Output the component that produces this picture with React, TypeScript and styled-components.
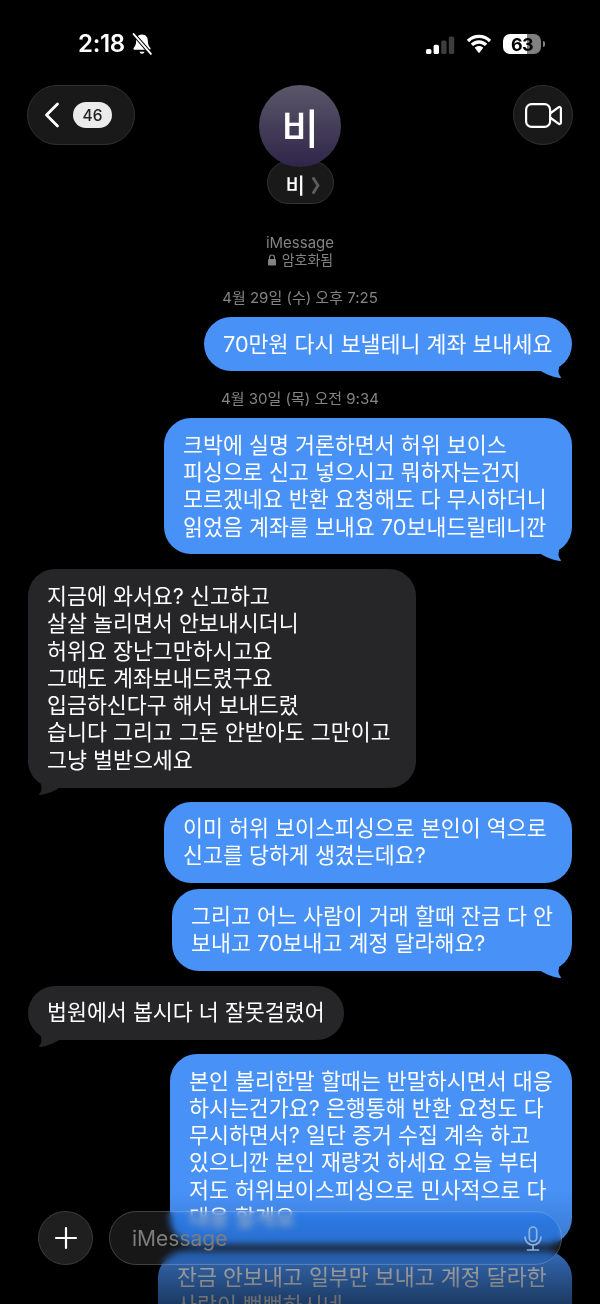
import React from 'react';
import styled, { createGlobalStyle } from 'styled-components';

const FONT = `Inter, "Noto Sans CJK KR", "Noto Sans", sans-serif`;

const GlobalStyle = createGlobalStyle`
  html, body {
    margin: 0;
    padding: 0;
    background: #000;
  }
`;

const Page = styled.div`
  position: relative;
  width: 600px;
  height: 1304px;
  overflow: hidden;
  background: #000;
  color: #fff;
  font-family: ${FONT};
`;

const StatusBar = styled.div`
  display: flex;
  align-items: center;
  justify-content: space-between;
  height: 85px;
  padding: 3px 59px 0 78px;
  box-sizing: border-box;
`;

const StatusGroup = styled.div<{ $gap: number }>`
  display: flex;
  align-items: center;
  gap: ${(p) => p.$gap}px;
`;

const Clock = styled.span`
  font-size: 24px;
  font-weight: 600;
  line-height: 24px;
  letter-spacing: -0.3px;
`;

const Battery = styled.div`
  position: relative;
  display: flex;
  align-items: center;
  justify-content: center;
  width: 38px;
  height: 20px;
  border-radius: 7px;
  background: linear-gradient(90deg, #fff 0 63%, #808080 63% 100%);
  color: #000;
  font-size: 18px;
  font-weight: 700;
  letter-spacing: -0.6px;
  &::after {
    content: '';
    position: absolute;
    right: -4px;
    top: 7px;
    width: 2px;
    height: 6px;
    border-radius: 0 2px 2px 0;
    background: #808080;
  }
`;

const Header = styled.header`
  display: grid;
  grid-template-columns: 1fr auto 1fr;
  align-items: start;
  padding: 0 27px;
`;

const BackPill = styled.div`
  display: flex;
  align-items: center;
  justify-self: start;
  gap: 13px;
  box-sizing: border-box;
  width: 108px;
  height: 60px;
  padding-left: 16px;
  border-radius: 30px;
  background: #191919;
  border: 1px solid #303030;
`;

const CountBadge = styled.span`
  display: flex;
  align-items: center;
  justify-content: center;
  width: 39px;
  height: 26px;
  border-radius: 13px;
  background: #ebebeb;
  color: #222;
  font-size: 15.5px;
  font-weight: 500;
`;

const VideoButton = styled.div`
  display: flex;
  align-items: center;
  justify-content: center;
  justify-self: end;
  box-sizing: border-box;
  width: 60px;
  height: 60px;
  border-radius: 50%;
  background: #191919;
  border: 1px solid #303030;
`;

const Contact = styled.div`
  display: flex;
  flex-direction: column;
  align-items: center;
`;

const Avatar = styled.div`
  position: relative;
  z-index: 1;
  display: flex;
  align-items: center;
  justify-content: center;
  width: 82px;
  height: 82px;
  border-radius: 50%;
  background: linear-gradient(180deg, #5b5769 0%, #2f2549 100%);
  font-size: 41px;
  font-weight: 500;
`;

const NamePill = styled.div`
  display: flex;
  align-items: center;
  gap: 7px;
  box-sizing: border-box;
  width: 67px;
  height: 43px;
  margin-top: -6px;
  padding: 5px 0 0 18px;
  border-radius: 22px;
  background: #191919;
  border: 1px solid #333;
  font-size: 21px;
  font-weight: 500;
  line-height: 1;
`;

const ServiceInfo = styled.div`
  display: flex;
  flex-direction: column;
  align-items: center;
  margin-top: 30px;
  color: #838383;
  font-size: 15px;
  line-height: 17px;
`;

const ServiceRow = styled.div`
  display: flex;
  align-items: center;
  gap: 5px;
  font-size: 14px;
`;

const Thread = styled.main`
  display: flex;
  flex-direction: column;
  padding: 0 28px;
`;

const Timestamp = styled.div<{ $top: number }>`
  margin: ${(p) => p.$top}px 0 9px;
  text-align: center;
  color: #858585;
  font-size: 15px;
  line-height: 20px;
`;

const Bubble = styled.div<{ $sent?: boolean; $width: number; $gap?: number; $indent?: number }>`
  position: relative;
  align-self: ${(p) => (p.$sent ? 'flex-end' : 'flex-start')};
  flex: none;
  box-sizing: border-box;
  width: ${(p) => p.$width}px;
  margin-top: ${(p) => p.$gap ?? 0}px;
  padding: 13.5px 0 13.5px ${(p) => p.$indent ?? 19}px;
  border-radius: 27px;
  background: ${(p) => (p.$sent ? '#4791f7' : '#262628')};
  color: #fff;
  font-size: 21.7px;
  line-height: 27.3px;
`;

const Line = styled.span`
  display: block;
  white-space: nowrap;
`;

const Tail = styled.svg<{ $sent?: boolean }>`
  position: absolute;
  bottom: -8px;
  ${(p) => (p.$sent ? 'right: 9px;' : 'left: 9px; transform: scaleX(-1);')}
  width: 26px;
  height: 17px;
`;

const Scrim = styled.div`
  position: absolute;
  left: 0;
  right: 0;
  bottom: 0;
  height: 114px;
  pointer-events: none;
  background: linear-gradient(
    180deg,
    rgba(0, 0, 0, 0) 0%,
    rgba(0, 0, 0, 0.14) 40%,
    rgba(0, 0, 0, 0.3) 58%,
    rgba(0, 0, 0, 0.6) 100%
  );
`;

const Composer = styled.div`
  position: absolute;
  left: 38px;
  bottom: 39px;
  display: flex;
  gap: 16px;
`;

const AddButton = styled.div`
  display: flex;
  align-items: center;
  justify-content: center;
  box-sizing: border-box;
  width: 55px;
  height: 54px;
  border-radius: 50%;
  background: #1f1f1f;
  border: 1px solid #3a3a3a;
`;

const InputField = styled.div`
  display: flex;
  align-items: center;
  justify-content: space-between;
  box-sizing: border-box;
  width: 453px;
  height: 54px;
  padding: 0 19px 0 22px;
  border-radius: 27px;
  border: 1px solid rgba(255, 255, 255, 0.18);
  background: rgba(255, 255, 255, 0.09);
  backdrop-filter: blur(3.5px) brightness(0.78) saturate(1.6);
  color: #7d7d7d;
  font-size: 21px;
`;

const Wave = ({ n, on }: { n: number; on: boolean }) => (
  <rect x={n * 7.6} y={13 - n * 4.2} width="5.4" height={5 + n * 4.2} rx="1.6" fill={on ? '#fff' : '#3d3d3d'} />
);

const TailShape = ({ color, isSent }: { color: string; isSent?: boolean }) => (
  <Tail $sent={isSent} viewBox="0 0 26 17">
    <path d="M0 0L22 0L22 6Q20.5 11.500 23.800 15Q24.400 16.400 22.600 16.100Q12 14.500 3 8.500Z" fill={color} />
  </Tail>
);

const Lines = ({ items }: { items: string[] }) => (
  <>
    {items.map((t) => (
      <Line key={t}>{t}</Line>
    ))}
  </>
);

export default function App() {
  return (
    <Page>
      <GlobalStyle />
      <StatusBar>
        <StatusGroup $gap={7}>
          <Clock>2:18</Clock>
          <svg width="20" height="23" viewBox="0 0 19 22">
            <path d="M9.500 1.500c3.600 0 5.600 2.800 5.600 6.200 0 3.200.8 5 2.400 6.600.5.6.2 1.700-.8 1.700H2.300c-1 0-1.300-1.100-.8-1.700 1.600-1.600 2.400-3.400 2.400-6.600 0-3.400 2-6.200 5.600-6.200z" fill="#fff" />
            <path d="M7 18h5a2.600 2.600 0 0 1-5 0z" fill="#fff" />
            <path d="M1.500 1L18 20" stroke="#000" strokeWidth="3.600" />
            <path d="M1.500 1L18 20" stroke="#fff" strokeWidth="1.800" strokeLinecap="round" />
          </svg>
        </StatusGroup>
        <StatusGroup $gap={11}>
          <svg width="29" height="19" viewBox="0 0 29 19">
            <g transform="translate(0 1)">
              <Wave n={0} on />
              <Wave n={1} on />
              <Wave n={2} on={false} />
              <Wave n={3} on={false} />
            </g>
          </svg>
          <svg width="26" height="20" viewBox="0 0 25 19">
            <path d="M12.500 3.800c3.700 0 7 1.500 9.500 3.900l2.200-2.300C21.100 2.500 17 .6 12.500.6S3.900 2.500.8 5.400L3 7.700c2.500-2.400 5.800-3.900 9.500-3.900z" fill="#fff" />
            <path d="M12.500 9.200c2.200 0 4.200.9 5.700 2.300l2.200-2.300c-2.100-2-4.800-3.200-7.900-3.200s-5.800 1.200-7.900 3.200l2.200 2.300c1.500-1.400 3.500-2.300 5.700-2.300z" fill="#fff" />
            <path d="M12.500 11.400c-1.600 0-3 .6-4.100 1.600l4.100 5.400 4.100-5.400c-1.100-1-2.500-1.600-4.100-1.600z" fill="#fff" />
          </svg>
          <Battery>63</Battery>
        </StatusGroup>
      </StatusBar>

      <Header>
        <BackPill>
          <svg width="16" height="26" viewBox="0 0 16 26" fill="none">
            <path d="M13.500 2L2.500 13l11 11" stroke="#fff" strokeWidth="2.800" strokeLinecap="round" strokeLinejoin="round" />
          </svg>
          <CountBadge>46</CountBadge>
        </BackPill>
        <Contact>
          <Avatar>비</Avatar>
          <NamePill>
            비
            <svg width="8" height="17" viewBox="0 0 8 17" fill="none">
              <path d="M1.500 1.500L6 8.500l-4.500 7" stroke="#5c5c5c" strokeWidth="3" strokeLinecap="round" strokeLinejoin="round" />
            </svg>
          </NamePill>
        </Contact>
        <VideoButton>
          <svg width="37" height="25" viewBox="0 0 37 25" fill="none" stroke="#fff" strokeWidth="2.200">
            <rect x="1.100" y="1.100" width="24" height="22.800" rx="5.500" />
            <path d="M25 10.500l8.800-6.300c.9-.6 2.100 0 2.100 1.100v14.400c0 1.100-1.200 1.700-2.100 1.100L25 14.500" strokeLinejoin="round" />
          </svg>
        </VideoButton>
      </Header>

      <ServiceInfo>
        iMessage
        <ServiceRow>
          <svg width="10" height="12" viewBox="0 0 10 12">
            <path d="M2.500 5V3.500a2.500 2.500 0 0 1 5 0V5" stroke="#838383" strokeWidth="1.200" fill="none" />
            <rect x="1" y="5" width="8" height="6.500" rx="1.300" fill="#838383" />
          </svg>
          암호화됨
        </ServiceRow>
      </ServiceInfo>

      <Thread>
        <Timestamp $top={20}>4월 29일 (수) 오후 7:25</Timestamp>
        <Bubble $sent $width={368}>
          <Lines items={['70만원 다시 보낼테니 계좌 보내세요']} />
          <TailShape color="#4791f7" isSent />
        </Bubble>

        <Timestamp $top={18}>4월 30일 (목) 오전 9:34</Timestamp>
        <Bubble $sent $width={408}>
          <Lines items={['크박에 실명 거론하면서 허위 보이스', '피싱으로 신고 넣으시고 뭐하자는건지', '모르겠네요 반환 요청해도 다 무시하더니', '읽었음 계좌를 보내요 70보내드릴테니깐']} />
          <TailShape color="#4791f7" isSent />
        </Bubble>

        <Bubble $width={388} $gap={15}>
          <Lines items={['지금에 와서요? 신고하고', '살살 놀리면서 안보내시더니', '허위요 장난그만하시고요', '그때도 계좌보내드렸구요', '입금하신다구 해서 보내드렸', '습니다 그리고 그돈 안받아도 그만이고', '그냥 벌받으세요']} />
          <TailShape color="#262628" />
        </Bubble>

        <Bubble $sent $width={408} $gap={14}>
          <Lines items={['이미 허위 보이스피싱으로 본인이 역으로', '신고를 당하게 생겼는데요?']} />
        </Bubble>

        <Bubble $sent $width={400} $gap={6}>
          <Lines items={['그리고 어느 사람이 거래 할때 잔금 다 안', '보내고 70보내고 계정 달라해요?']} />
          <TailShape color="#4791f7" isSent />
        </Bubble>

        <Bubble $width={316} $gap={15}>
          <Lines items={['법원에서 봅시다 너 잘못걸렸어']} />
          <TailShape color="#262628" />
        </Bubble>

        <Bubble $sent $width={402} $gap={14}>
          <Lines items={['본인 불리한말 할때는 반말하시면서 대응', '하시는건가요? 은행통해 반환 요청도 다', '무시하면서? 일단 증거 수집 계속 하고', '있으니깐 본인 재량것 하세요 오늘 부터', '저도 허위보이스피싱으로 민사적으로 다', '대응 할게요']} />
        </Bubble>

        <Bubble $sent $width={414} $gap={6}>
          <Lines items={['잔금 안보내고 일부만 보내고 계정 달라한', '사람이 뻔뻔하시네']} />
        </Bubble>
      </Thread>

      <Scrim />

      <Composer>
        <AddButton>
          <svg width="24" height="24" viewBox="0 0 24 24" fill="none">
            <path d="M12 2v20M2 12h20" stroke="#fff" strokeWidth="2.200" strokeLinecap="round" />
          </svg>
        </AddButton>
        <InputField>
          iMessage
          <svg width="18" height="25" viewBox="0 0 18 25" fill="none" stroke="#8fb4e0" strokeWidth="1.700" strokeLinecap="round">
            <rect x="5.300" y="1" width="7.400" height="14.500" rx="3.700" />
            <path d="M1 11c0 4.500 3.500 8 8 8s8-3.500 8-8M9 19v4.500M3.500 24h11" />
          </svg>
        </InputField>
      </Composer>
    </Page>
  );
}
